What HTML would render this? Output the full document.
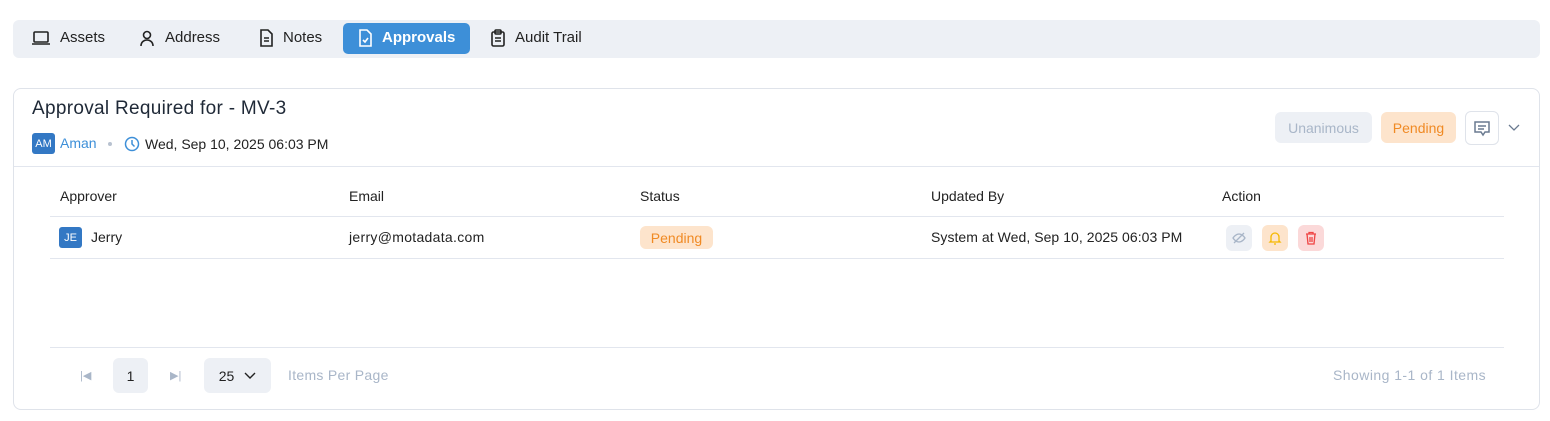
<!DOCTYPE html>
<html><head><style>
*{box-sizing:border-box;margin:0;padding:0}
body{width:1550px;height:421px;background:#fff;font-family:"Liberation Sans",sans-serif;color:#1f2937;position:relative;overflow:hidden}
.tabs{position:absolute;left:13px;top:20px;width:1527px;height:38px;background:#edf0f5;border-radius:6px}
.tab{position:absolute;top:3px;height:31px;display:flex;align-items:center;font-size:15px;color:#222;padding-bottom:2px}
.tab svg{margin-right:9px}
.tab.act{background:#3d8fd8;color:#fff;border-radius:5px;padding:0 15px 2px 14px;font-weight:bold}
.card{position:absolute;left:13px;top:88px;width:1527px;height:322px;border:1px solid #dfe3ea;border-radius:8px}
.abs{position:absolute}
.pill{position:absolute;height:31px;border-radius:6px;font-size:14px;display:flex;align-items:center;justify-content:center}
.th{position:absolute;top:188px;font-size:14px;color:#222}
.td{position:absolute;top:229px;font-size:14px;color:#222}
.line{position:absolute;height:1px;background:#e2e6ee}
.ib{position:absolute;top:225px;width:26px;height:26px;border-radius:6px;display:flex;align-items:center;justify-content:center}
</style></head><body>
<div class="tabs">
 <div class="tab" style="left:18px"><svg width="20" height="16" viewBox="0 0 20 16" fill="none" stroke="#222" stroke-width="1.6"><rect x="3" y="2" width="14" height="10" rx="1"/><path d="M1 14h18"/></svg>Assets</div>
 <div class="tab" style="left:125px"><svg width="18" height="18" viewBox="0 0 18 18" fill="none" stroke="#222" stroke-width="1.6"><circle cx="9" cy="6" r="3.5"/><path d="M3 17c0-4 3-6 6-6s6 2 6 6"/></svg>Address</div>
 <div class="tab" style="left:245px"><svg width="16" height="18" viewBox="0 0 16 18" fill="none" stroke="#222" stroke-width="1.6"><path d="M3 1h7l4 4v12H3z"/><path d="M6 9h5M6 12h5"/></svg>Notes</div>
 <div class="tab act" style="left:330px"><svg width="16" height="18" viewBox="0 0 16 18" fill="none" stroke="#fff" stroke-width="1.6"><path d="M3 1h7l4 4v12H3z"/><path d="M6 11l2 2 3-4"/></svg>Approvals</div>
 <div class="tab" style="left:477px"><svg width="16" height="18" viewBox="0 0 16 18" fill="none" stroke="#222" stroke-width="1.6"><rect x="2" y="3" width="12" height="14" rx="1.5"/><rect x="5" y="1" width="6" height="4" rx="1"/><path d="M5 9h6M5 12h6"/></svg>Audit Trail</div>
</div>
<div class="card"></div>
<div class="abs" style="left:32px;top:98px;font-size:19px;color:#1f2937;letter-spacing:0.3px">Approval Required for - MV-3</div>
<div class="abs" style="left:32px;top:133px;width:23px;height:21px;background:#3378c4;border-radius:3px;color:#fff;font-size:11px;display:flex;align-items:center;justify-content:center">AM</div>
<div class="abs" style="left:60px;top:135px;font-size:14px;color:#3d8fd8">Aman</div>
<div class="abs" style="left:108px;top:142px;width:4px;height:4px;border-radius:50%;background:#b8c2d0"></div>
<svg class="abs" style="left:124px;top:136px" width="16" height="16" viewBox="0 0 16 16" fill="none" stroke="#3d8fd8" stroke-width="1.5"><circle cx="8" cy="8" r="6.5"/><path d="M8 4v4l2.5 2.5"/></svg>
<div class="abs" style="left:145px;top:136px;font-size:14px;color:#222">Wed, Sep 10, 2025 06:03 PM</div>
<div class="pill" style="left:1275px;top:112px;width:97px;background:#edf0f5;color:#a9b6c8">Unanimous</div>
<div class="pill" style="left:1381px;top:112px;width:75px;background:#fde4cc;color:#f08a24">Pending</div>
<div class="pill" style="left:1465px;top:111px;width:34px;height:34px;border:1px solid #dfe3ea;background:#fff"><svg width="18" height="18" viewBox="0 0 18 18" fill="none" stroke="#6a7a90" stroke-width="1.5"><path d="M2 3h14v10h-4l-2 3-2-3H2z"/><path d="M5 7h8M5 10h6"/></svg></div>
<svg class="abs" style="left:1508px;top:124px" width="12" height="8" viewBox="0 0 12 8" fill="none" stroke="#6a7a90" stroke-width="1.3"><path d="M1 1l5 5 5-5"/></svg>
<div class="line" style="left:14px;top:166px;width:1525px"></div>
<div class="th" style="left:60px">Approver</div>
<div class="th" style="left:349px">Email</div>
<div class="th" style="left:640px">Status</div>
<div class="th" style="left:931px">Updated By</div>
<div class="th" style="left:1222px">Action</div>
<div class="line" style="left:50px;top:216px;width:1454px"></div>
<div class="abs" style="left:59px;top:227px;width:23px;height:21px;background:#3378c4;border-radius:3px;color:#fff;font-size:11px;display:flex;align-items:center;justify-content:center">JE</div>
<div class="td" style="left:91px">Jerry</div>
<div class="td" style="left:349px;letter-spacing:0.3px">jerry@motadata.com</div>
<div class="pill" style="left:640px;top:226px;width:73px;height:23px;background:#fde4cc;color:#f08a24">Pending</div>
<div class="td" style="left:931px;letter-spacing:0.05px">System at Wed, Sep 10, 2025 06:03 PM</div>
<div class="ib" style="left:1226px;background:#edf0f5"><svg width="14" height="14" viewBox="0 0 14 14" fill="none" stroke="#a9b6c8" stroke-width="1.3"><path d="M1 7s2.5-4 6-4 6 4 6 4-2.5 4-6 4-6-4-6-4z"/><path d="M2 12L12 2"/></svg></div>
<div class="ib" style="left:1262px;background:#fde4cc"><svg width="14" height="14" viewBox="0 0 14 14" fill="none" stroke="#f5b800" stroke-width="1.3"><path d="M3 10V6a4 4 0 018 0v4l1 1H2z"/><path d="M6 13h2"/></svg></div>
<div class="ib" style="left:1298px;background:#fbd9d9"><svg width="14" height="14" viewBox="0 0 14 14" fill="none" stroke="#ef4444" stroke-width="1.3"><path d="M2 3h10M5 3V1.5h4V3M3 3l1 10h6l1-10M6 6v5M8 6v5"/></svg></div>
<div class="line" style="left:50px;top:258px;width:1454px"></div>
<div class="line" style="left:50px;top:347px;width:1454px"></div>
<div class="abs" style="left:80px;top:369px;font-size:11px;color:#a9b6c8">|◀</div>
<div class="pill" style="left:113px;top:358px;width:35px;height:35px;background:#edf0f5;color:#222">1</div>
<div class="abs" style="left:170px;top:369px;font-size:11px;color:#a9b6c8">▶|</div>
<div class="pill" style="left:204px;top:358px;width:67px;height:35px;background:#edf0f5;color:#222;gap:10px">25 <svg width="12" height="8" viewBox="0 0 12 8" fill="none" stroke="#222" stroke-width="1.4"><path d="M1 1l5 5 5-5"/></svg></div>
<div class="abs" style="left:288px;top:367px;font-size:14px;color:#a9b6c8;letter-spacing:0.3px">Items Per Page</div>
<div class="abs" style="left:1333px;top:367px;font-size:14px;color:#a9b6c8;letter-spacing:0.45px">Showing 1-1 of 1 Items</div>
</body></html>
